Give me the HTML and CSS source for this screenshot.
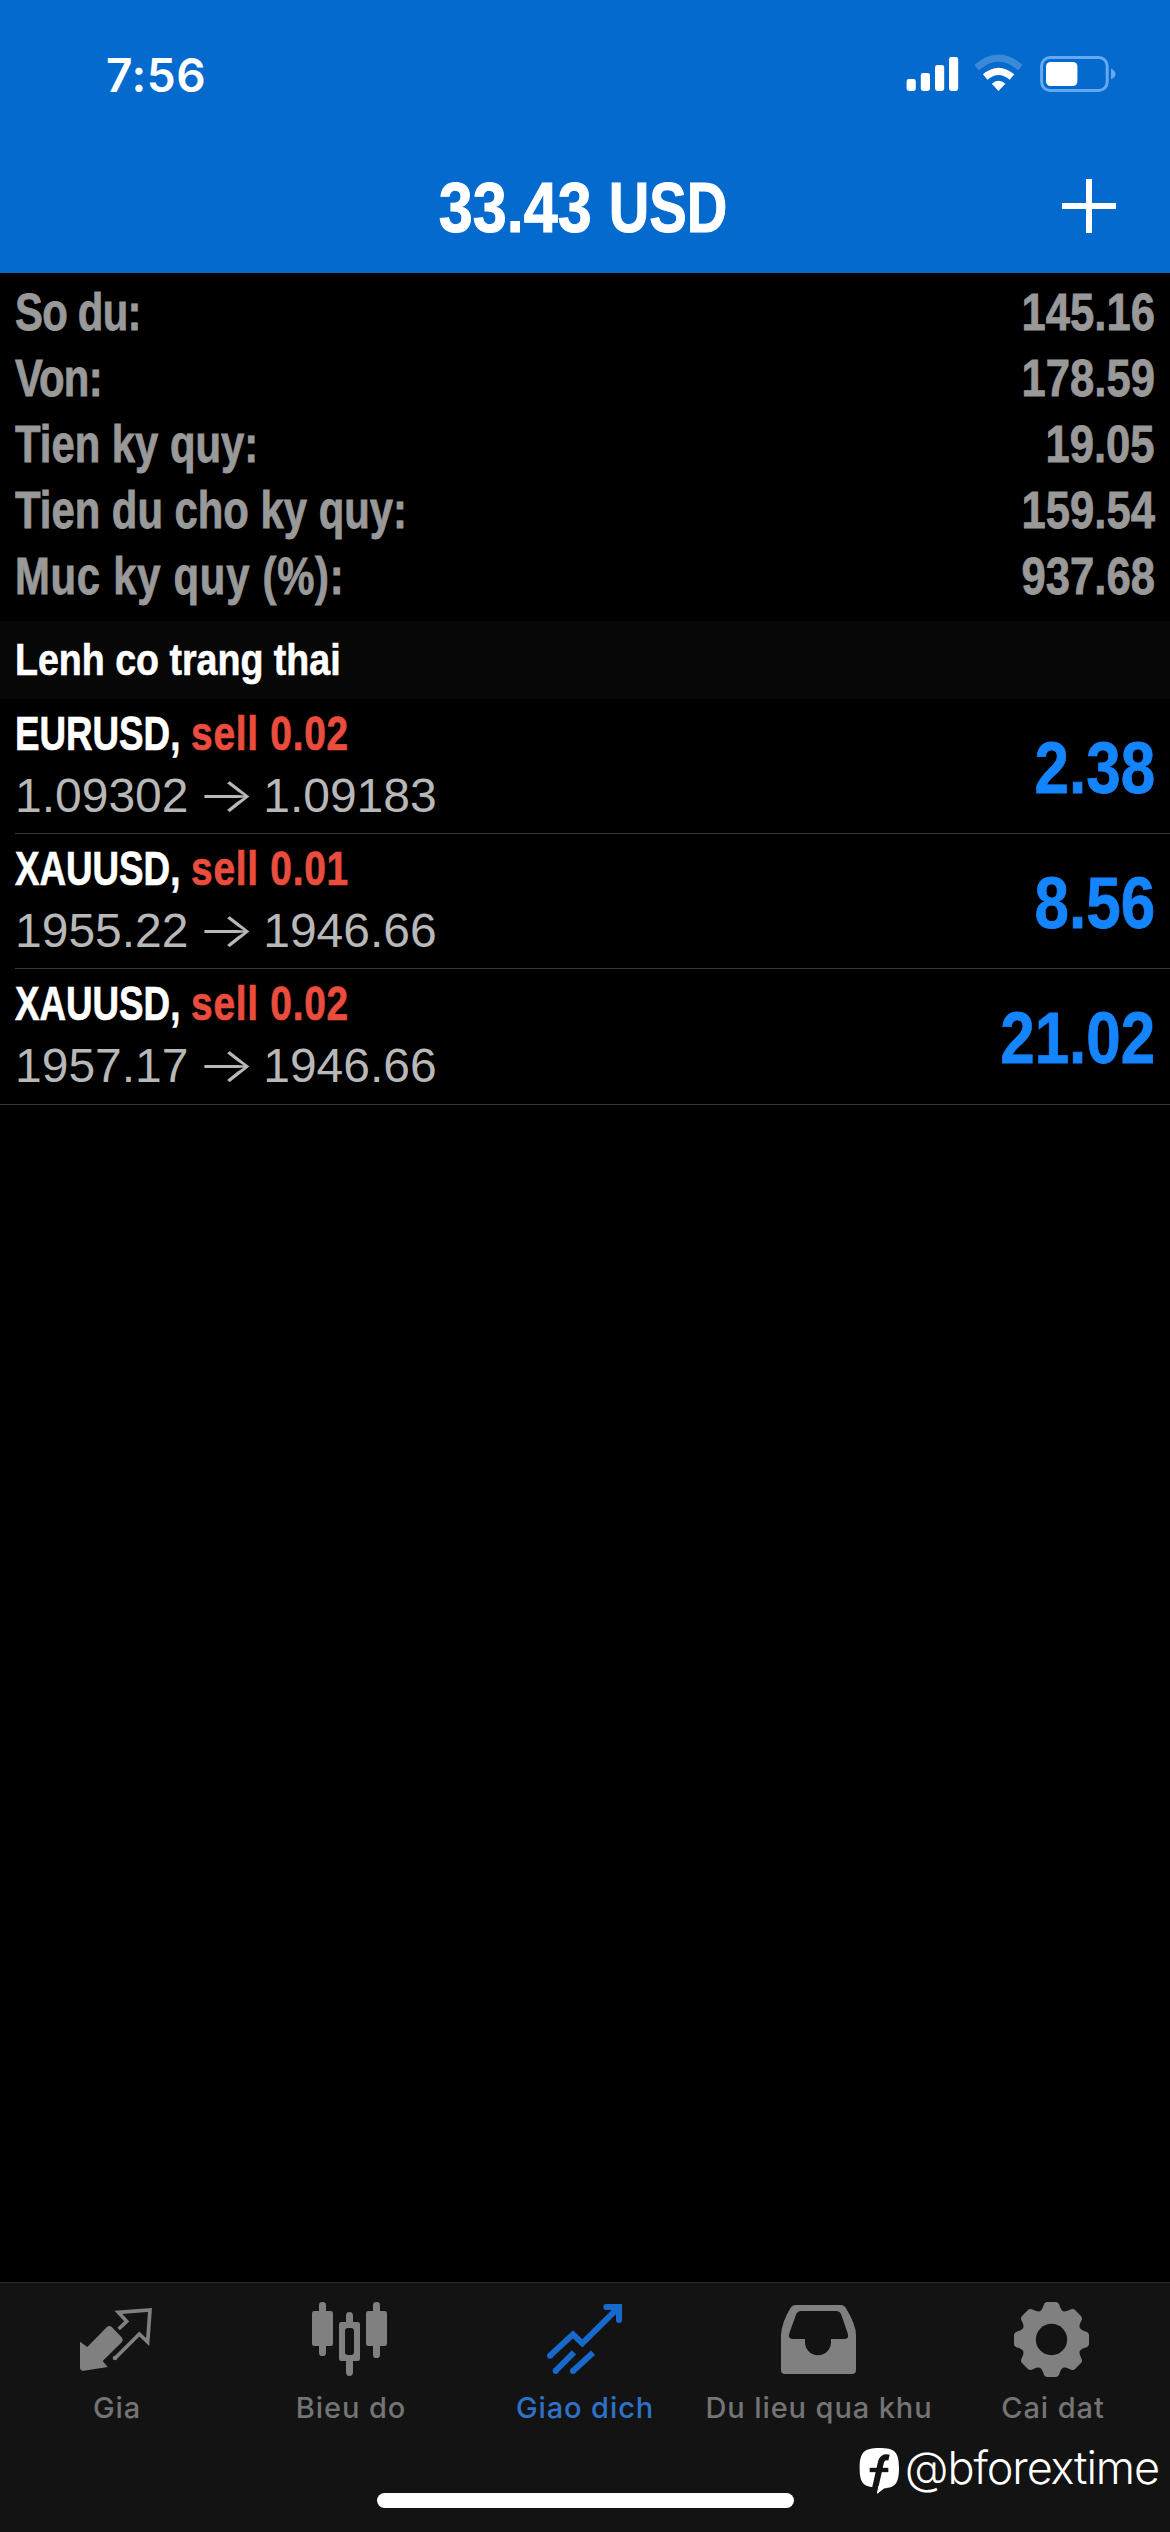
FILE: index.html
```html
<!DOCTYPE html>
<html lang="vi">
<head>
<meta charset="utf-8">
<title>Giao dich</title>
<link rel="stylesheet" href="styles.css">
</head>
<body>
<div class="screen">
  <header class="header">
    <div class="status">
      <span class="time">7:56</span>
      <svg class="status-icons" viewBox="0 0 212 40" aria-hidden="true">
        <g fill="#fff">
          <rect x="1.6" y="25" width="9.2" height="12" rx="2.4"/>
          <rect x="15.8" y="19" width="9.2" height="18" rx="2.4"/>
          <rect x="30" y="11" width="9.2" height="26" rx="2.4"/>
          <rect x="44" y="3" width="9.2" height="34" rx="2.4"/>
          <path d="M93.5 37L86.8 29.8Q93.5 23.600 100.4 29.800Z"/>
        </g>
        <g fill="none" stroke="#fff" stroke-width="7">
          <path d="M80.2 23Q93.500 11.600 107 23"/>
          <path d="M71.6 13.600Q93.500 -5.200 115.400 13.600" stroke-opacity=".22"/>
        </g>
        <rect x="136.6" y="3.5" width="65.6" height="33" rx="8.5" fill="none" stroke="#65a9f0" stroke-width="3"/>
        <rect x="141" y="8" width="31.4" height="24" rx="4.5" fill="#fff"/>
        <path d="M206 14.5Q210.6 17 210.6 20Q210.6 23 206 25.500Z" fill="#65a9f0"/>
      </svg>
    </div>
    <div class="titlebar">
      <h1 class="title">33.43 <span class="currency">USD</span></h1>
      <svg class="plus" viewBox="0 0 54 54"><path d="M27 0V54M0 27H54" stroke="#fff" stroke-width="6"/></svg>
    </div>
  </header>

  <section class="summary">
    <div class="line"><span class="key tight">So du:</span><span class="num">145.16</span></div>
    <div class="line"><span class="key tight">Von:</span><span class="num">178.59</span></div>
    <div class="line"><span class="key">Tien ky quy:</span><span class="num">19.05</span></div>
    <div class="line"><span class="key">Tien du cho ky quy:</span><span class="num">159.54</span></div>
    <div class="line"><span class="key loose">Muc ky quy (%):</span><span class="num">937.68</span></div>
  </section>

  <h2 class="section"><span class="section-text">Lenh co trang thai</span></h2>

  <main class="orders">
    <article class="order">
      <div class="info">
        <div class="deal"><span class="symbol">EURUSD,</span> <span class="side">sell 0.02</span></div>
        <div class="prices">1.09302 <span class="arrow">→</span> 1.09183</div>
      </div>
      <span class="profit">2.38</span>
    </article>
    <article class="order">
      <div class="info">
        <div class="deal"><span class="symbol">XAUUSD,</span> <span class="side">sell 0.01</span></div>
        <div class="prices">1955.22 <span class="arrow">→</span> 1946.66</div>
      </div>
      <span class="profit">8.56</span>
    </article>
    <article class="order">
      <div class="info">
        <div class="deal"><span class="symbol">XAUUSD,</span> <span class="side">sell 0.02</span></div>
        <div class="prices">1957.17 <span class="arrow">→</span> 1946.66</div>
      </div>
      <span class="profit">21.02</span>
    </article>
  </main>

  <nav class="tabbar">
    <div class="tabs">
      <a class="tab">
        <svg class="icon" viewBox="234 90 234 234">
          <path fill="currentColor" d="M240 215L262 231L320 172Q328 164 336 172L366 203Q371 210 366 216L308 273L323 291L252 302Q240 304 240 292Z"/>
          <path fill="none" stroke="currentColor" stroke-width="11" d="M356 177L380 154L355 127L450 120L443 216L418 192L346 264"/>
          <circle cx="345" cy="264" r="7" fill="currentColor"/>
        </svg>
        <span class="label">Gia</span>
      </a>
      <a class="tab">
        <svg class="icon" viewBox="936 90 234 234">
          <g fill="currentColor">
            <rect x="957" y="96" width="21" height="162" rx="10"/>
            <rect x="936" y="123" width="63" height="105" rx="7"/>
            <rect x="1119" y="96" width="21" height="168" rx="10"/>
            <rect x="1098" y="123" width="63" height="105" rx="7"/>
            <path d="M1048 126Q1059 126 1059 137V156H1073Q1080 156 1080 163V266Q1080 273 1073 273H1059V307Q1059 318 1048 318Q1038 318 1038 307V273H1024Q1017 273 1017 266V163Q1017 156 1024 156H1038V137Q1038 126 1048 126Z"/>
          </g>
          <rect x="1035" y="174" width="27" height="81" rx="9" fill="#131313"/>
        </svg>
        <span class="label">Bieu do</span>
      </a>
      <a class="tab active">
        <svg class="icon" viewBox="438 90 234 234">
          <g fill="none" stroke="currentColor" stroke-width="18">
            <path d="M450 257L519 193L547 220L655 113"/>
            <path d="M618 111H657V150M466 303L522 247M519 303L579 248"/>
          </g>
          <g fill="currentColor"><circle cx="450" cy="257" r="9"/><circle cx="467" cy="303" r="9"/><circle cx="519" cy="303" r="9"/><circle cx="619" cy="111" r="9"/><circle cx="657" cy="150" r="9"/><path d="M640 102H666V135Z"/></g>
        </svg>
        <span class="label">Giao dich</span>
      </a>
      <a class="tab">
        <svg class="icon" viewBox="60 90 234 234">
          <path fill="currentColor" fill-rule="evenodd" d="M108 105H242Q252 105 258 115Q288 165 288 195V300Q288 312 276 312H75Q63 312 63 300V195Q65 158 91 115Q97 105 108 105ZM124 123Q112 123 108 134L88 190Q83 207 98 207H135V217A38 38 0 0 0 213 217V207H254Q268 207 263 190L244 134Q240 123 228 123Z"/>
        </svg>
        <span class="label">Du lieu qua khu</span>
      </a>
      <a class="tab">
        <svg class="icon" viewBox="762 90 234 234">
          <defs><path id="tooth" d="M834 128Q846 122 850 108Q853 96 862 96H887Q896 96 899 108Q903 122 915 128L874.500 208Z"/></defs>
          <g fill="currentColor">
            <circle cx="874.500" cy="208.500" r="87"/>
            <use href="#tooth"/>
            <use href="#tooth" transform="rotate(45 874.500 208.500)"/>
            <use href="#tooth" transform="rotate(90 874.500 208.500)"/>
            <use href="#tooth" transform="rotate(135 874.500 208.500)"/>
            <use href="#tooth" transform="rotate(180 874.500 208.500)"/>
            <use href="#tooth" transform="rotate(225 874.500 208.500)"/>
            <use href="#tooth" transform="rotate(270 874.500 208.500)"/>
            <use href="#tooth" transform="rotate(315 874.500 208.500)"/>
          </g>
          <circle cx="874.500" cy="208.500" r="47" fill="#131313"/>
        </svg>
        <span class="label">Cai dat</span>
      </a>
    </div>
    <div class="credit">
      <svg class="credit-logo" viewBox="294 531 126 141">
        <path fill="#fff" d="M355 534C400 534 414 545 414 594C414 638 404 653 369 655L348 671L351 652C306 653 296 638 296 594C296 546 310 534 355 534Z"/>
        <path fill="none" stroke="#131313" stroke-width="18" d="M384 563Q363 558 359 580L341 660"/>
        <path stroke="#131313" stroke-width="13" d="M326 600H382"/>
        <path fill="#fff" d="M348 671L352 648L372 653Z"/>
      </svg>
      <span class="credit-name">@bforextime</span>
    </div>
    <div class="home-indicator"></div>
  </nav>
</div>
</body>
</html>
```

FILE: styles.css
```css
* { box-sizing: border-box; }

body { margin: 0; background: #000; }

.screen {
  width: 1170px;
  height: 2532px;
  display: flex;
  flex-direction: column;
  background: #000;
  color: #fff;
  font-family: "Liberation Sans", Arial, sans-serif;
  white-space: nowrap;
  overflow: hidden;
}

/* Header */
.header { height: 273px; background: #056acd; }

.status {
  height: 140px;
  padding: 0 53px 0 106px;
  display: flex;
  justify-content: space-between;
  align-items: flex-start;
}

.time {
  margin-top: 46px;
  font: 600 46px/58px Inter, sans-serif;
  letter-spacing: 0.6px;
}

.status-icons { width: 212px; height: 40px; margin-top: 54px; }

.titlebar {
  height: 133px;
  padding: 0 54px;
  display: grid;
  grid-template-columns: 54px 1fr 54px;
  align-items: start;
}

.title {
  grid-column: 2;
  margin: 27px 4px 0 0;
  font-size: 71px;
  line-height: 82px;
  text-align: center;
  -webkit-text-stroke: 1px;
  transform: scaleX(0.86);
}

.currency {
  display: inline-block;
  margin-right: -12px;
  transform: scaleX(0.92);
  transform-origin: left;
}

.plus { width: 54px; height: 54px; margin-top: 39px; }

/* Account summary */
.summary {
  height: 348px;
  padding: 7px 15px 0;
  color: #999;
  font-size: 51px;
  font-weight: 700;
  -webkit-text-stroke: 0.8px;
}

.line { height: 66px; line-height: 66px; display: flex; justify-content: space-between; }
.key { transform: scaleX(0.82); transform-origin: left; }
.num { transform: scaleX(0.855); transform-origin: right; }
.tight { letter-spacing: -0.9px; }
.loose { letter-spacing: 0.9px; }

.section {
  height: 78px;
  margin: 0;
  padding: 0 15px;
  background: #070707;
  font-size: 45px;
  line-height: 78px;
  -webkit-text-stroke: 0.6px;
}

.section-text { display: inline-block; transform: scaleX(0.835); transform-origin: left; }

/* Orders */
.order {
  height: 135px;
  margin-left: 15px;
  padding-right: 15px;
  display: flex;
  justify-content: space-between;
  border-bottom: 1px solid #383838;
}

.order:last-child { height: 136px; margin-left: 0; padding-left: 15px; }

.info { padding-top: 3px; font-size: 48px; }

.deal {
  height: 63px;
  line-height: 63px;
  font-weight: 700;
  -webkit-text-stroke: 0.7px;
  transform: scaleX(0.81);
  transform-origin: left;
}

.symbol {
  display: inline-block;
  margin-right: -12px;
  transform: scaleX(0.945);
  transform-origin: left;
}

.side { color: #ea4d3d; letter-spacing: 0.9px; }
.prices { height: 63px; line-height: 60px; color: #b8b8b8; }

.arrow {
  display: inline-block;
  width: 48px;
  font-family: Inter, sans-serif;
  font-weight: 300;
  text-align: center;
  transform: scaleX(1.28);
}

.profit {
  color: #1485ff;
  font-size: 72px;
  font-weight: 700;
  line-height: 138px;
  -webkit-text-stroke: 0.8px;
  transform: scaleX(0.86);
  transform-origin: right;
}

/* Tab bar */
.tabbar {
  height: 250px;
  margin-top: auto;
  display: flex;
  flex-direction: column;
  background: #131313;
  border-top: 1px solid #2b2b2b;
}

.tabs { height: 157px; display: grid; grid-template-columns: repeat(5, 1fr); }

.tab {
  padding-top: 17px;
  display: flex;
  flex-direction: column;
  align-items: center;
  color: #808080;
}

.icon { width: 78px; height: 78px; overflow: visible; }

.label {
  margin-top: 12px;
  color: #747474;
  font: 450 29px/36px Inter, sans-serif;
  letter-spacing: 0.9px;
}

.active { color: #1769cb; }
.active .label { color: #2e72c8; }

.credit {
  height: 53px;
  padding-right: 11px;
  display: flex;
  justify-content: flex-end;
  gap: 4px;
}

.credit-logo { width: 42px; height: 47px; margin-top: 7px; }
.credit-name { font: 350 45px/56px Inter, sans-serif; letter-spacing: -1.1px; }

.home-indicator {
  width: 417px;
  height: 15px;
  margin: 0 auto;
  border-radius: 8px;
  background: #fff;
}
```
